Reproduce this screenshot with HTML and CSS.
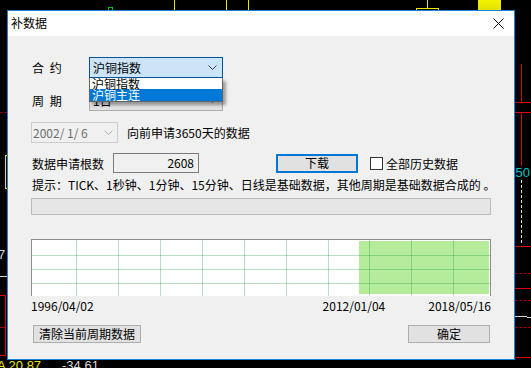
FILE: index.html
```html
<!DOCTYPE html>
<html lang="zh-CN">
<head>
    <meta charset="UTF-8">
    <meta name="viewport" content="width=device-width, initial-scale=1.0">
    <title>补数据</title>
    <link rel="stylesheet" href="styles.css">
</head>
<body>
    <!-- chart behind the dialog -->
    <div class="screen">
        <span class="mark green-box"></span>
        <span class="mark yv" style="left:174px"></span>
        <span class="mark yv" style="left:226px"></span>
        <span class="mark yv" style="left:248px"></span>
        <span class="mark y-stem"></span>
        <span class="mark y-bracket"></span>
        <span class="mark y-block"></span>

        <span class="mark dash-dr" style="left:0;top:112px;width:7px"></span>
        <span class="mark y-side"></span>
        <span class="mark txt-white left-seven">7</span>
        <span class="mark line-white" style="left:0;top:276px;width:7px"></span>
        <span class="mark red-box"></span>
        <span class="mark dash-dr" style="left:0;top:327px;width:5px"></span>
        <span class="mark txt-yellow bottom-a">A 20.87</span>
        <span class="mark txt-white bottom-b">-34.61</span>

        <span class="mark rv" style="top:64px;height:38px"></span>
        <span class="mark line-red" style="top:102px"></span>
        <span class="mark line-red" style="top:112px"></span>
        <span class="mark rv" style="top:112px;height:54px"></span>
        <span class="mark txt-cyan right-fifty">.50</span>
        <span class="mark white-dash"></span>
        <span class="mark line-red" style="top:246px"></span>
        <span class="mark dash-dr" style="left:515px;top:273px;width:16px"></span>
        <span class="mark line-red" style="top:288px"></span>
        <span class="mark dash-dr" style="left:515px;top:300px;width:16px"></span>
        <span class="mark line-white" style="left:515px;top:316px;width:12px"></span>
        <span class="mark line-white" style="left:527px;top:317px;width:4px"></span>
        <span class="mark dash-dr" style="left:515px;top:327px;width:16px"></span>
        <span class="mark line-red" style="top:357px"></span>
    </div>

    <div class="dialog">
        <div class="titlebar">
            <span class="title">补数据</span>
            <svg class="close" width="11" height="11" viewBox="0 0 11 11">
                <path d="M0.5 0.5 L10.5 10.5 M10.5 0.5 L0.5 10.5" stroke="#000" stroke-width="1" fill="none"/>
            </svg>
        </div>

        <div class="content">
            <div class="row row-contract">
                <span class="label">合 约</span>
                <div class="combo combo-active">
                    <span>沪铜指数</span>
                    <svg class="chevron" width="9" height="5" viewBox="0 0 9 5">
                        <path d="M0.5 0.5 L4.5 4.5 L8.5 0.5" stroke="#404040" fill="none"/>
                    </svg>
                </div>
                <div class="dropdown">
                    <div class="item">沪铜指数</div>
                    <div class="item item-selected">沪铜主连</div>
                </div>
            </div>

            <div class="row row-period">
                <span class="label">周 期</span>
                <div class="combo">
                    <span>1日</span>
                    <svg class="chevron" width="9" height="5" viewBox="0 0 9 5">
                        <path d="M0.5 0.5 L4.5 4.5 L8.5 0.5" stroke="#606060" fill="none"/>
                    </svg>
                </div>
            </div>

            <div class="row row-date">
                <div class="datepick">
                    <span>2002/ 1/ 6</span>
                    <svg class="chevron" width="9" height="5" viewBox="0 0 9 5">
                        <path d="M0.5 0.5 L4.5 4.5 L8.5 0.5" stroke="#b0b0b0" fill="none"/>
                    </svg>
                </div>
                <span class="date-note">向前申请3650天的数据</span>
            </div>

            <div class="row row-count">
                <span class="count-label">数据申请根数</span>
                <div class="count-box">2608</div>
                <button class="btn btn-download">下载</button>
                <span class="checkbox"></span>
                <span class="check-label">全部历史数据</span>
            </div>

            <div class="hint">提示：TICK、1秒钟、1分钟、15分钟、日线是基础数据，其他周期是基础数据合成的 。</div>

            <div class="progress"></div>

            <div class="chart">
                <svg width="458" height="56" viewBox="0 0 458 56">
                    <rect x="0" y="0" width="458" height="56" fill="#fff"/>
                    <rect x="327" y="1" width="130" height="53" fill="#b4ec9c"/>
                    <g stroke="rgba(0,140,40,0.28)" stroke-width="1">
                        <path d="M0 15.5 H458 M0 29.5 H458 M0 43.5 H458"/>
                        <path d="M44.5 0 V56 M86.5 0 V56 M128.5 0 V56 M170.5 0 V56 M212.5 0 V56 M254.5 0 V56 M296.5 0 V56 M337.5 0 V56 M379.5 0 V56 M421.5 0 V56"/>
                    </g>
                </svg>
            </div>

            <div class="dates">
                <span>1996/04/02</span>
                <span class="date-mid">2012/01/04</span>
                <span>2018/05/16</span>
            </div>

            <div class="actions">
                <button class="btn btn-clear">清除当前周期数据</button>
                <button class="btn btn-ok">确定</button>
            </div>
        </div>
    </div>
</body>
</html>
```

FILE: styles.css
```css
body {
    margin: 0;
    width: 531px;
    height: 368px;
    overflow: hidden;
    background-color: #000;
    position: relative;
    font-family: "Noto Sans CJK SC", "Noto Sans", sans-serif;
    font-size: 12px;
    color: #000;
}

/* background chart, a free canvas */
.screen {
    position: absolute;
    inset: 0;
}

.mark {
    position: absolute;
    display: block;
}

.green-box {
    left: 108px;
    top: 7px;
    width: 3px;
    height: 4px;
    border: 1px solid #00c800;
    border-bottom: none;
}

.yv {
    top: 0;
    width: 1px;
    height: 10px;
    background: #e8e800;
}

.y-stem {
    left: 427px;
    top: 0;
    width: 1px;
    height: 8px;
    background: #e8e800;
}

.y-bracket {
    left: 416px;
    top: 8px;
    width: 21px;
    height: 3px;
    border: 1px solid #e8e800;
    border-bottom: none;
}

.y-block {
    left: 478px;
    top: 0;
    width: 23px;
    height: 10px;
    background: linear-gradient(#f4f400, #e0e000);
}

.y-side {
    left: 5px;
    top: 155px;
    width: 3px;
    height: 32px;
    border: 1px solid #e8e800;
    border-right: none;
}

.dash-dr {
    height: 0;
    border-top: 1px dashed #a00000;
}

.line-white {
    height: 1px;
    background: #d8d8d8;
}

.line-red {
    left: 515px;
    width: 16px;
    height: 1px;
    background: #e00000;
}

.rv {
    left: 521px;
    width: 1px;
    background: #e00000;
}

.red-box {
    left: -1px;
    top: 295px;
    width: 6px;
    height: 59px;
    border: 1px solid #e00000;
    border-left: none;
}

.white-dash {
    left: 521px;
    top: 180px;
    height: 63px;
    border-left: 1px dashed #e0e0e0;
}

.txt-white,
.txt-yellow,
.txt-cyan {
    font-family: "Liberation Sans", sans-serif;
    font-size: 13px;
    line-height: 13px;
    white-space: nowrap;
}

.txt-white { color: #d8d8d8; }
.txt-yellow { color: #e8e800; }
.txt-cyan { color: #00c8c8; }

.left-seven { left: -2px; top: 248px; }
.bottom-a { left: -3px; top: 359px; }
.bottom-b { left: 62px; top: 359px; }
.right-fifty { left: 512px; top: 166px; }

/* dialog window */
.dialog {
    position: absolute;
    left: 7px;
    top: 10px;
    width: 506px;
    height: 348px;
    border: 1px solid #1883d7;
    background-color: #f0f0f0;
}

.titlebar {
    height: 25px;
    background: #fff;
    display: flex;
    align-items: center;
    justify-content: space-between;
    padding: 0 10px 0 3px;
}

.title {
    line-height: 14px;
    padding-bottom: 1px;
}

.close {
    display: block;
}

.content {
    padding: 0 23px;
}

.row {
    display: flex;
    align-items: center;
    height: 21px;
    white-space: nowrap;
}

.label {
    width: 58px;
    word-spacing: 3px;
    padding-left: 1px;
    box-sizing: border-box;
}

.row-contract {
    margin-top: 21px;
    position: relative;
    z-index: 2;
}

.row-period { margin-top: 12px; }
.row-date { margin-top: 11px; }

.combo {
    width: 134px;
    height: 21px;
    box-sizing: border-box;
    border: 1px solid #adadad;
    background: #e1e1e1;
    display: flex;
    align-items: center;
    justify-content: space-between;
    padding: 0 5px 0 3px;
}

.combo-active {
    border-color: #005499;
    background: #cce4f7;
}

.chevron {
    display: block;
}

.dropdown {
    position: absolute;
    left: 58px;
    top: 21px;
    width: 134px;
    box-sizing: border-box;
    border: 1px solid #646464;
    border-top: none;
    background: #fff;
    box-shadow: 3px 3px 3px rgba(0, 0, 0, 0.35);
}

.item {
    height: 11px;
    line-height: 11px;
    padding-left: 2px;
}

.item-selected {
    height: 12px;
    line-height: 12px;
    background: #0078d7;
    color: #fff;
}

.datepick {
    width: 87px;
    height: 21px;
    box-sizing: border-box;
    border: 1px solid #cccccc;
    display: flex;
    align-items: center;
    justify-content: space-between;
    padding: 0 4px 0 1px;
    color: #6d6d6d;
}

.date-note {
    margin-left: 9px;
}

.row-count {
    margin-top: 10px;
    height: 20px;
}

.count-label {
    padding-left: 1px;
}

.count-box {
    margin-left: 9px;
    width: 86px;
    height: 20px;
    box-sizing: border-box;
    border: 1px solid #7a7a7a;
    text-align: right;
    padding-right: 4px;
    line-height: 18px;
}

.btn {
    font-family: inherit;
    font-size: 12px;
    color: #000;
    background: #e1e1e1;
    border: 1px solid #adadad;
    box-sizing: border-box;
    padding: 0;
    margin: 0;
    height: 18px;
    line-height: 14px;
}

.btn-download {
    margin-left: 77px;
    width: 82px;
    height: 19px;
    border: 2px solid #0078d7;
}

.checkbox {
    margin-left: 12px;
    width: 13px;
    height: 13px;
    box-sizing: border-box;
    border: 1px solid #333;
    background: #fff;
}

.check-label {
    margin-left: 3px;
}

.hint {
    margin-top: 5px;
    height: 14px;
    line-height: 14px;
    padding-left: 1px;
    white-space: nowrap;
}

.progress {
    margin-top: 6px;
    height: 17px;
    box-sizing: border-box;
    border: 1px solid #bcbcbc;
    background: #e6e6e6;
}

.chart {
    margin-top: 24px;
    height: 57px;
    box-sizing: border-box;
    border: 1px solid #8c8c8c;
    border-bottom: none;
}

.chart svg {
    display: block;
}

.dates {
    margin-top: 3px;
    height: 14px;
    line-height: 14px;
    display: flex;
    white-space: nowrap;
}

.date-mid {
    margin-left: auto;
    margin-right: 43px;
}

.actions {
    margin-top: 12px;
    display: flex;
    justify-content: space-between;
}

.btn-clear {
    margin-left: 2px;
    width: 108px;
}

.btn-ok {
    margin-right: 1px;
    width: 82px;
}
```
